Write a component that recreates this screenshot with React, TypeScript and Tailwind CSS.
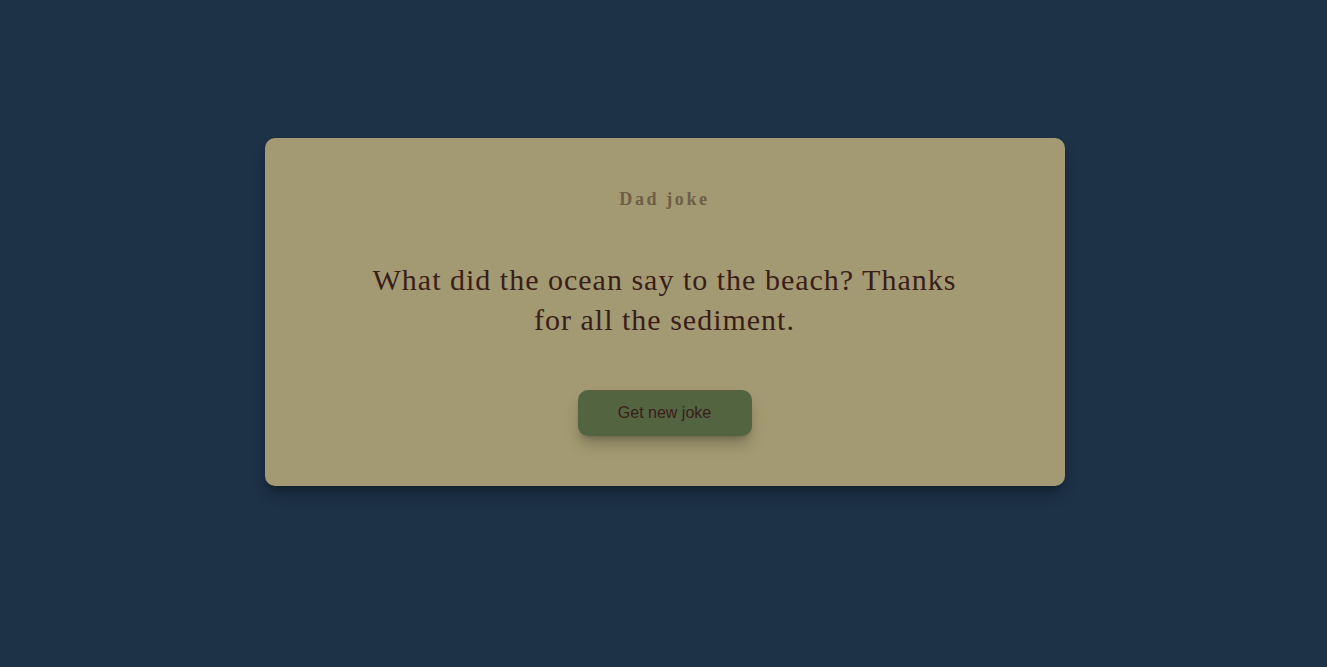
export default function App() {
  return (
    <div className="min-h-screen w-full bg-[#1d3147] flex justify-center pt-[138px] pl-[2px]">
      <div className="w-[800px] h-fit bg-[#a39a73] rounded-[10px] shadow-lg shadow-black/30 flex flex-col items-center pt-12 pb-[50px] px-12">
        <h2 className="font-['Liberation_Serif',serif] text-[18px] leading-[27px] font-bold tracking-[2.6px] text-[#6e5e48]">
          Dad joke
        </h2>
        <p className="mt-[47px] max-w-[600px] text-center font-['Liberation_Serif',serif] text-[30px] leading-[40px] tracking-[1px] text-[#3a1e19]">
          What did the ocean say to the beach? Thanks for all the sediment.
        </p>
        <button className="mt-[50px] w-[174px] h-[46px] rounded-[10px] bg-[#536540] font-['Liberation_Sans',sans-serif] text-[16px] text-[#3b1c1c] shadow-lg shadow-black/25">
          Get new joke
        </button>
      </div>
    </div>
  );
}
